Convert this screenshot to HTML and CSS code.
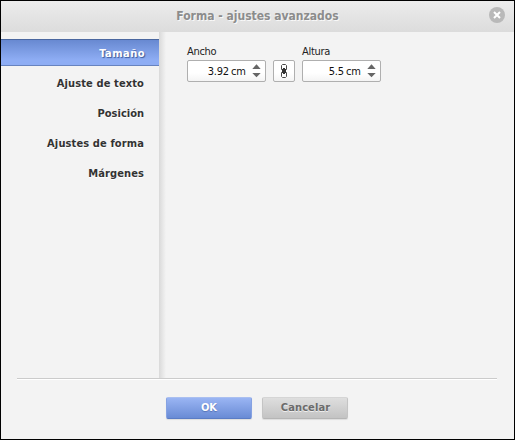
FILE: index.html
```html
<!DOCTYPE html>
<html lang="es">
<head>
<meta charset="utf-8">
<title>Forma - ajustes avanzados</title>
<link rel="stylesheet" href="styles.css">
</head>
<body>
<div class="dialog">
  <header class="header">
    <h1 class="title">Forma - ajustes avanzados</h1>
    <svg class="close" width="16" height="16" viewBox="0 0 16 16"><circle cx="8" cy="8" r="8" fill="#b9b9b9"/><path d="M5 5l6 6M11 5l-6 6" stroke="#fff" stroke-width="2"/></svg>
  </header>
  <div class="body">
    <nav class="menu">
      <a class="item active"><span class="t1">Tamaño</span></a>
      <a class="item"><span class="t2">Ajuste de texto</span></a>
      <a class="item"><span class="t3">Posición</span></a>
      <a class="item"><span class="t4">Ajustes de forma</span></a>
      <a class="item"><span class="t5">Márgenes</span></a>
    </nav>
    <div class="divider"></div>
    <main class="content">
      <div class="field">
        <label class="label">Ancho</label>
        <div class="spinner"><span class="value">3.92 cm</span>
          <svg class="arrows" width="9" height="14" viewBox="0 0 9 14"><path d="M0.3 5L4.5 0.3 8.7 5zM0.3 9h8.4L4.5 13.3z" fill="#666"/></svg>
        </div>
      </div>
      <button class="link">
        <svg width="8" height="14" viewBox="0 0 8 14" fill="none"><path d="M2.5 5.5h-1v-4l1-1h3l1 1v4h-1M2.5 8.5h-1v4l1 1h3l1-1v-4h-1" stroke="#4a4a4a"/><path d="M3 4h2v1h1v4H5v1H3V9H2V5h1z" fill="#333"/></svg>
      </button>
      <div class="field">
        <label class="label">Altura</label>
        <div class="spinner"><span class="value">5.5 cm</span>
          <svg class="arrows" width="9" height="14" viewBox="0 0 9 14"><path d="M0.3 5L4.5 0.3 8.7 5zM0.3 9h8.4L4.5 13.3z" fill="#666"/></svg>
        </div>
      </div>
    </main>
  </div>
  <div class="separator"></div>
  <footer class="footer">
    <button class="btn primary"><span>OK</span></button>
    <button class="btn"><span class="cancel">Cancelar</span></button>
  </footer>
</div>
</body>
</html>
```
FILE: styles.css
```css
* { box-sizing: border-box; }
body { margin: 0; background: #f3f3f3; font-family: Tahoma, "DejaVu Sans Condensed", "DejaVu Sans", sans-serif; font-size: 11px; }
.dialog { width: 515px; height: 440px; border: 1px solid #000; background: #f3f3f3; display: flex; flex-direction: column; }
.header { height: 31px; flex: none; display: grid; grid-template-columns: 33px 1fr 33px; align-items: center; background: linear-gradient(#ececec, #dcdcdc); }
.title { grid-column: 2; margin: -2px 0 0; text-align: center; font-size: 12px; line-height: 16px; color: #8c8c8c; text-shadow: 1px 1px 0 #f8f8f8; white-space: nowrap; }
.close { display: block; margin: -3px 0 0 8px; }
.body { height: 346px; flex: none; display: flex; }
.menu { width: 158px; padding-top: 7px; }
.item { display: flex; align-items: center; justify-content: flex-end; height: 27px; margin-bottom: 3px; padding-right: 15px; font-weight: bold; color: #333; white-space: nowrap; text-shadow: 0 1px 0 #fff; }
.item span { padding-top: 1px; }
.t1 { letter-spacing: 0.5px; }
.t2, .t4 { letter-spacing: 0.12px; }
.t5 { letter-spacing: 0.1px; }
.active { padding-right: 14px; color: #fff; border-top: 1px solid #4a679f; border-bottom: 1px solid #6783bf; background: linear-gradient(#6889d1, #8eadf4 80%); text-shadow: 1px 1px 1px #3c5a99; }
.divider { width: 7px; background: linear-gradient(90deg, #d9d9d9, #f3f3f3); }
.content { flex: 1; display: flex; align-items: flex-start; gap: 7px; padding: 11px 0 0 21px; }
.label { display: block; height: 17px; line-height: 16px; padding-top: 1px; color: #222; letter-spacing: -0.3px; }
.spinner, .link { border: 1px solid #afafaf; border-radius: 2px; height: 22px; background: linear-gradient(#fff 60%, #f4f4f4); }
.spinner { width: 79px; display: flex; align-items: center; justify-content: flex-end; padding-right: 4px; color: #111; }
.value { letter-spacing: -0.3px; word-spacing: -0.5px; }
.arrows { margin-left: 6.5px; display: block; }
.link { width: 22px; margin: 17px 0 0; padding: 0; display: flex; align-items: center; justify-content: center; }
.separator { height: 2px; flex: none; margin: 0 17px 0 16px; background: #fff; border-top: 1px solid #cbcbcb; }
.footer { display: flex; gap: 10px; padding: 17px 0 0 165px; }
.btn { width: 86px; height: 22px; padding: 0; border: 1px solid #c4c4c4; border-top-color: #d5d5d5; border-bottom-color: #b5b5b5; border-radius: 2px; background: linear-gradient(#dedede, #c3c3c3); font: bold 11px/18px Tahoma, "DejaVu Sans Condensed", "DejaVu Sans", sans-serif; color: #6b6b6b; text-shadow: 0 1px 0 #eee; box-shadow: 0 1px 1px #ddd; }
.primary { border-color: #86a2e2; border-top-color: #aabff0; border-bottom-color: #5a7cc5; background: linear-gradient(#9ab5f3, #698bd5); color: #fff; text-shadow: 0 1px 1px #5573b5; }
.cancel { letter-spacing: 0.1px; padding-left: 1px; }
```
